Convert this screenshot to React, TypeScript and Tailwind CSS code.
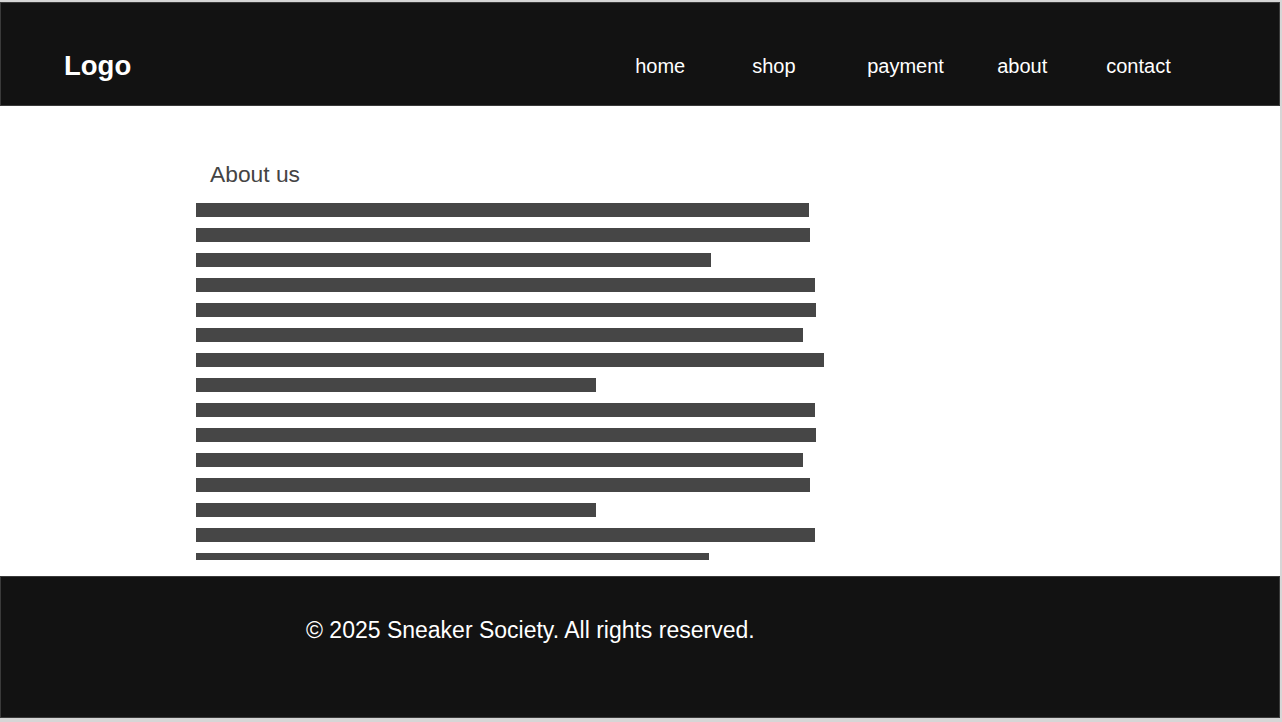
import React from "react";

const bars = [613, 614, 515, 619, 620, 607, 628, 400, 619, 620, 607, 614, 400, 619, 513];

const links = [
  { label: "home", w: "w-[117px]" },
  { label: "shop", w: "w-[115px]" },
  { label: "payment", w: "w-[130px]" },
  { label: "about", w: "w-[109px]" },
  { label: "contact", w: "w-auto" },
];

export default function App() {
  return (
    <div
      className="w-[1282px] h-[722px] bg-[#d6d6d6] pt-[2px] pr-[2px] pb-[4px] flex flex-col overflow-hidden"
      style={{ fontFamily: '"Liberation Sans", Arial, sans-serif' }}
    >
      <header className="h-[104px] shrink-0 bg-[#121212] border border-[#3a3a3a] flex items-center pt-[24px] pl-[63px]">
        <div className="text-white font-bold text-[27.5px] leading-none">Logo</div>
        <nav className="ml-[504px] flex items-center text-white text-[20px] leading-none">
          {links.map((l) => (
            <span key={l.label} className={l.w}>
              {l.label}
            </span>
          ))}
        </nav>
      </header>
      <main className="h-[470px] shrink-0 bg-white pl-[196px] pt-[56px]">
        <h1 className="pl-[14px] text-[22.8px] leading-[26px] text-[#444444] h-[41px] -mt-[1px] pt-0">About us</h1>
        <div className="h-[357px] overflow-hidden flex flex-col gap-[11px] mt-[1px]">
          {bars.map((w, i) => (
            <div key={i} className="h-[14px] shrink-0 bg-[#464646]" style={{ width: w }} />
          ))}
        </div>
      </main>
      <footer className="flex-1 bg-[#121212] border border-[#3a3a3a] pl-[305px] pt-[40px]">
        <p className="text-white text-[23px] leading-[26px]">© 2025 Sneaker Society. All rights reserved.</p>
      </footer>
    </div>
  );
}
